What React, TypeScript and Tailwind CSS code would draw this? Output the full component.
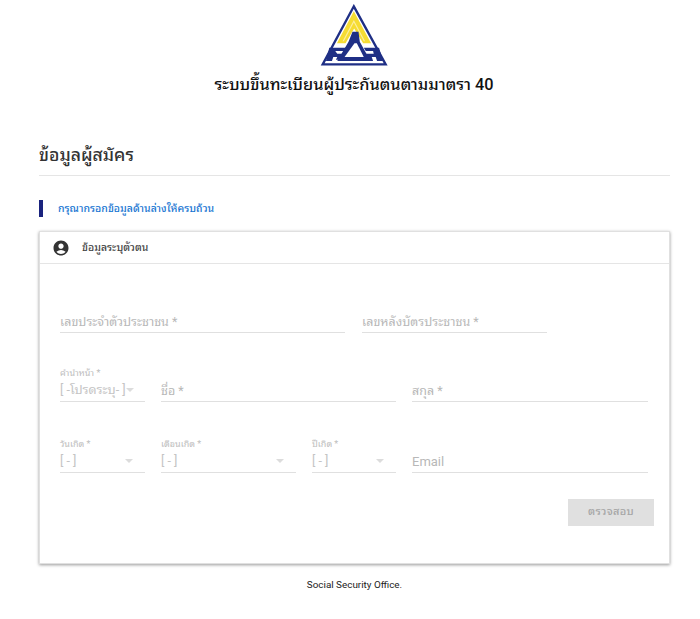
import { MdAccountCircle } from 'react-icons/md';

function Logo() {
  return (
    <svg viewBox="60 10 208 190" className="w-[69px] h-[63px] ml-[9px]">
      <path d="M162 17 L258 192 L68 192 Z" fill="#fff" stroke="#1f2f85" strokeWidth="7" />
      <path d="M162 32 L214 128 L190 128 L163 84 L137 128 L111 128 Z" fill="#f6dc33" />
      <path d="M162 58 L196 122 L192 122 L162 66 L132 122 L128 122 Z" fill="#fbeea0" />
      <path d="M158 94 L176 94 L180 124 L212 182 L112 182 L146 124 Z" fill="#1f2f85" />
      <path d="M164 128 L171 128 L192 170 L134 170 Z" fill="#fff" />
      <path d="M88 142 L142 142 L134 152 L106 152 L112 160 L130 160 L120 178 L108 178 L112 170 L100 170 L96 182 L78 182 Z" fill="#1f2f85" />
      <path d="M192 142 L238 142 L250 182 L232 182 L228 170 L216 170 L220 182 L208 182 L198 160 L222 160 L220 152 L198 152 Z" fill="#1f2f85" />
    </svg>
  );
}

function TextField({ label, className, labelSize = 'text-[12.5px]' }: { label: string; className: string; labelSize?: string }) {
  return (
    <div className={`${className} h-[28px] border-b border-[#e0e0e0] flex items-end`}>
      <span className={`${labelSize} leading-[20px] text-[#b8b8b8] whitespace-nowrap`}>{label}</span>
    </div>
  );
}

function SelectField({ label, value, className }: { label: string; value: string; className: string }) {
  return (
    <div className={`${className} h-[37px] border-b border-[#e0e0e0] flex flex-col justify-end`}>
      <span className="text-[9px] leading-[12px] text-[#bdbdbd] whitespace-nowrap">{label}</span>
      <div className="flex items-center justify-between h-[22px] pr-[12px]">
        <span className="text-[12.6px] leading-[20px] text-[#c4c4c4] whitespace-nowrap">{value}</span>
        <span className="w-0 h-0 border-x-[4px] border-x-transparent border-t-[4px] border-t-[#dcdcdc]" />
      </div>
    </div>
  );
}

export default function App() {
  return (
    <div className="w-[700px] h-[619px] bg-white text-black pt-[4px] font-['Roboto','Noto_Sans_Thai_Looped','Noto_Sans','Noto_Sans_Thai','Liberation_Sans',sans-serif]">
      <div className="flex flex-col items-center">
        <Logo />
        <h1 className="mt-[6px] ml-[8px] text-[16.3px] leading-[24px] font-medium text-[#111]">
          ระบบขึ้นทะเบียนผู้ประกันตนตามมาตรา 40
        </h1>
      </div>

      <div className="mx-[39px] w-[631px]">
        <div className="mt-[33px] pb-[6px] border-b border-[#e5e5e5] h-[46px] flex items-end">
          <h2 className="text-[17.6px] leading-[28px] font-medium text-[#333]">ข้อมูลผู้สมัคร</h2>
        </div>

        <div className="mt-[24px] h-[17px] border-l-[4px] border-[#1a237e] pl-[15px] flex items-center">
          <span className="text-[10.5px] leading-[16px] font-medium text-[#1976d2]">กรุณากรอกข้อมูลด้านล่างให้ครบถ้วน</span>
        </div>

        <div className="mt-[14px] h-[333px] border border-[#e0e0e0] shadow-[0_1px_3px_rgba(0,0,0,0.4)] bg-white">
          <div className="h-[32px] border-b border-[#e5e5e5] flex items-center pl-[12px]">
            <MdAccountCircle className="w-[18px] h-[18px] text-[#333]" />
            <span className="ml-[12px] text-[10.5px] leading-[16px] font-medium text-[#444]">ข้อมูลระบุตัวตน</span>
          </div>

          <div className="pl-[20px] pr-[21px]">
            <div className="mt-[41px] flex gap-[17px]">
              <TextField label="เลขประจำตัวประชาชน *" className="w-[285px]" />
              <TextField label="เลขหลังบัตรประชาชน *" className="w-[185px]" />
            </div>

            <div className="mt-[32px] flex items-end gap-[16px]">
              <SelectField label="คำนำหน้า *" value="[ -โปรดระบุ- ]" className="w-[85px]" />
              <TextField label="ชื่อ *" className="w-[235px]" />
              <TextField label="สกุล *" className="w-[236px]" />
            </div>

            <div className="mt-[34px] flex items-end gap-[16px]">
              <SelectField label="วันเกิด *" value="[ - ]" className="w-[85px]" />
              <SelectField label="เดือนเกิด *" value="[ - ]" className="w-[135px]" />
              <SelectField label="ปีเกิด *" value="[ - ]" className="w-[84px]" />
              <TextField label="Email" className="w-[236px]" labelSize="text-[13px]" />
            </div>

            <div className="mt-[26px] flex justify-end mr-[-6px]">
              <button className="w-[86px] h-[27px] bg-[#e0e0e0] text-[11px] font-medium tracking-wide text-[#a6a6a6]">
                ตรวจสอบ
              </button>
            </div>
          </div>
        </div>

        <p className="mt-[14px] text-center text-[9.9px] leading-[14px] text-[#222]">Social Security Office.</p>
      </div>
    </div>
  );
}
